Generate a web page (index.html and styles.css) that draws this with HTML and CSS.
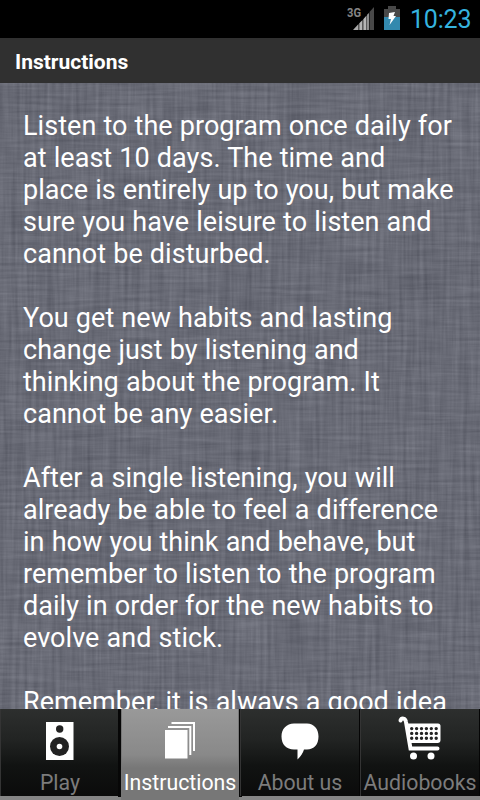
FILE: index.html
```html
<!DOCTYPE html>
<html lang="en">
<head>
  <meta charset="UTF-8">
  <meta name="viewport" content="width=device-width, initial-scale=1.0">
  <title>Instructions</title>
  <link rel="stylesheet" href="styles.css">
</head>
<body>
  <div class="screen">
    <div class="status-bar">
      <svg class="signal" width="30" height="26" viewBox="0 0 30 26">
        <text x="0" y="11" class="network" textLength="14" lengthAdjust="spacingAndGlyphs">3G</text>
        <path d="M6 24L11.500 18V24Z" fill="#aaa"/>
        <path d="M12.300 24V17.300L15.500 14V24ZM16.300 24V13.300L19.500 9.500V24ZM20.200 24V8.800L21.800 7V24Z" fill="#b5b5b5"/>
        <path d="M22.500 24V6L27 1V24Z" fill="#484848"/>
      </svg>
      <svg class="battery" width="16" height="24" viewBox="0 0 16 24">
        <path d="M4 0H12V3H16V12H0V3H4Z" fill="#484848"/>
        <path d="M0 11H16V24H0Z" fill="#3389ae"/>
        <path d="M5 7L11 6L9.500 10H12L5.500 19L7 13H4.500Z" fill="#fff"/>
      </svg>
      <span class="clock">10:23</span>
    </div>

    <div class="title-bar">
      <h1>Instructions</h1>
    </div>

    <div class="content">
      <!-- woven linen background -->
      <svg class="linen" width="480" height="626">
        <filter id="weft" x="0" y="0" width="100%" height="100%" color-interpolation-filters="sRGB">
          <feTurbulence type="fractalNoise" baseFrequency="0.018 0.3" numOctaves="3" seed="4"/>
          <feColorMatrix values="0.22 0 0 0 0.302  0.22 0 0 0 0.31  0.22 0 0 0 0.353  0 0 0 0 1"/>
        </filter>
        <filter id="warp" x="0" y="0" width="100%" height="100%" color-interpolation-filters="sRGB">
          <feTurbulence type="fractalNoise" baseFrequency="0.25 0.012" numOctaves="3" seed="9"/>
          <feColorMatrix values="0.22 0 0 0 0.302  0.22 0 0 0 0.31  0.22 0 0 0 0.353  0 0 0 0 1"/>
        </filter>
        <rect width="480" height="626" filter="url(#weft)"/>
        <rect width="480" height="626" filter="url(#warp)" opacity="0.5"/>
      </svg>
      <div class="text">
        <p>Listen to the program once daily for<br>at least 10 days. The time and<br>place is entirely up to you, but make<br>sure you have leisure to listen and<br>cannot be disturbed.</p>
        <p>You get new habits and lasting<br>change just by listening and<br>thinking about the program. It<br>cannot be any easier.</p>
        <p>After a single listening, you will<br>already be able to feel a difference<br>in how you think and behave, but<br>remember to listen to the program<br>daily in order for the new habits to<br>evolve and stick.</p>
        <p>Remember, it is always a good idea</p>
      </div>
    </div>

    <div class="tab-bar">
      <div class="tab">
        <svg class="icon" width="48" height="48" viewBox="0 0 48 48">
          <path d="M10 7H37.500V45H10Z" fill="#fff"/>
          <circle cx="23.700" cy="14" r="3.700" fill="#222"/>
          <circle cx="23.500" cy="31.500" r="9.500" fill="#222"/>
          <circle cx="23.500" cy="31.500" r="2.800" fill="#fff"/>
        </svg>
        <span class="label">Play</span>
      </div>
      <div class="tab active">
        <svg class="icon" width="48" height="48" viewBox="0 0 48 48">
          <path d="M9 15H31.500V43.500H9Z" fill="#fff"/>
          <path d="M12 12H34.300V40M15.500 8H38V36" fill="none" stroke="#fff" stroke-width="2"/>
        </svg>
        <span class="label">Instructions</span>
      </div>
      <div class="tab">
        <svg class="icon" width="48" height="48" viewBox="0 0 48 48">
          <path d="M18 8.500H31C38 8.500 42.500 14 42.500 21.500C42.500 29.500 38 34.500 31 34.500H28C27 38 25 41 21.500 44.500V34.500H18C10.500 34.500 5.500 29.500 5.500 21.500C5.500 14 10.500 8.500 18 8.500Z" fill="#fff"/>
        </svg>
        <span class="label">About us</span>
      </div>
      <div class="tab">
        <svg class="icon" width="48" height="48" viewBox="0 0 48 48">
          <path d="M4.500 5.500C5.500 2.500 9.500 3 10 7L14.500 33.500H41.500" fill="none" stroke="#fff" stroke-width="4" stroke-linecap="round"/>
          <path d="M11 8.500H42Q44.500 8.500 44.500 11V25Q44.500 28 41.500 28H14.500Z" fill="#fff"/>
          <path d="M15.700 13.600H42M15.700 18.400H42M15.700 23.200H42" fill="none" stroke="#222" stroke-width="3.400" stroke-linecap="round" stroke-dasharray="0 4.900"/>
          <circle cx="17.500" cy="41" r="3.500" fill="#fff"/>
          <circle cx="35" cy="41" r="3.500" fill="#fff"/>
        </svg>
        <span class="label">Audiobooks</span>
      </div>
    </div>
  </div>
</body>
</html>
```
FILE: styles.css
```css
* {
  box-sizing: border-box;
}

body {
  margin: 0;
  background-color: #000;
  font-family: Roboto, sans-serif;
  color: #fff;
}

.screen {
  display: flex;
  flex-direction: column;
  width: 480px;
  height: 800px;
  overflow: hidden;
}

.status-bar {
  display: flex;
  justify-content: flex-end;
  height: 38px;
  padding-right: 9px;
  background-color: #000;
}

.signal {
  margin: 6px 7px 0 0;
}

.network {
  font-size: 13px;
  font-weight: bold;
  fill: #858585;
}

.battery {
  margin: 6px 10px 0 0;
}

.clock {
  width: 61px;
  font-size: 25px;
  line-height: 40px;
  letter-spacing: -0.2px;
  text-align: right;
  white-space: nowrap;
  color: #35b3df;
}

.title-bar {
  height: 45px;
  padding-left: 15px;
  background-color: #303030;
}

.title-bar h1 {
  margin: 0;
  font-size: 21px;
  line-height: 48px;
  font-weight: bold;
}

.content {
  position: relative;
  height: 626px;
  overflow: hidden;
  background-color: #696b76;
}

.linen {
  position: absolute;
  top: 0;
  left: 0;
}

.text {
  position: relative;
  padding: 27px 0 0 23px;
  font-size: 27px;
  line-height: 32px;
  letter-spacing: 0.04px;
  word-spacing: 0.35px;
  white-space: nowrap;
}

.text p {
  margin: 0 0 32px;
}

.tab-bar {
  display: flex;
  height: 91px;
  padding-bottom: 4px;
  background-color: #858585;
}

.tab {
  display: flex;
  flex-direction: column;
  align-items: center;
  width: 120px;
  height: 87px;
  padding-top: 6px;
  border-left: 1px solid #343434;
  border-right: 1px solid #050505;
  background: linear-gradient(#2d2f2e, #222423 35%, #111312 65%, #0b0b0b);
}

/* the selected tab runs down over the strip, with dark gaps beside it */
.tab.active {
  width: 118px;
  height: 91px;
  margin: 0 1px;
  border-color: #aaa #777;
  background: linear-gradient(#999, #898989 50%, #777 65%, #777);
  box-shadow: -4px -2px 0 -1px #070707, 4px -2px 0 -1px #070707;
}

.icon {
  flex: none;
}

.label {
  margin-top: 5px;
  font-size: 21.3px;
  line-height: 30px;
  white-space: nowrap;
  color: #7c7c7c;
}

.tab.active .label {
  color: #fff;
}
```
